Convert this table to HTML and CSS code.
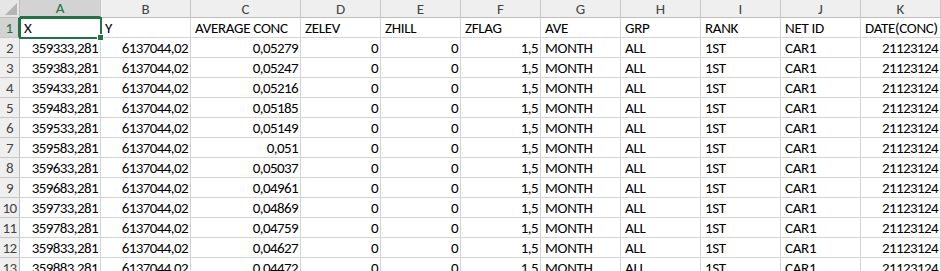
FILE: index.html
```html
<!DOCTYPE html>
<html>
<head>
<meta charset="utf-8">
<link rel="stylesheet" href="styles.css">
</head>
<body>
<div class="sheet" id="sheet">
  <div class="corner"><span class="tri"></span></div>
  <div class="ch sel">A</div><div class="ch">B</div><div class="ch">C</div><div class="ch">D</div><div class="ch">E</div><div class="ch">F</div><div class="ch">G</div><div class="ch">H</div><div class="ch">I</div><div class="ch">J</div><div class="ch">K</div>

  <div class="rh sel">1</div>
  <div class="c active">X<span class="handle"></span></div><div class="c">Y</div><div class="c">AVERAGE CONC</div><div class="c">ZELEV</div><div class="c">ZHILL</div><div class="c">ZFLAG</div><div class="c">AVE</div><div class="c">GRP</div><div class="c">RANK</div><div class="c">NET ID</div><div class="c">DATE(CONC)</div>

  <div class="rh">2</div><div class="c n">359333,281</div><div class="c n">6137044,02</div><div class="c n">0,05279</div><div class="c n">0</div><div class="c n">0</div><div class="c n">1,5</div><div class="c">MONTH</div><div class="c">ALL</div><div class="c">1ST</div><div class="c">CAR1</div><div class="c n">21123124</div>
  <div class="rh">3</div><div class="c n">359383,281</div><div class="c n">6137044,02</div><div class="c n">0,05247</div><div class="c n">0</div><div class="c n">0</div><div class="c n">1,5</div><div class="c">MONTH</div><div class="c">ALL</div><div class="c">1ST</div><div class="c">CAR1</div><div class="c n">21123124</div>
  <div class="rh">4</div><div class="c n">359433,281</div><div class="c n">6137044,02</div><div class="c n">0,05216</div><div class="c n">0</div><div class="c n">0</div><div class="c n">1,5</div><div class="c">MONTH</div><div class="c">ALL</div><div class="c">1ST</div><div class="c">CAR1</div><div class="c n">21123124</div>
  <div class="rh">5</div><div class="c n">359483,281</div><div class="c n">6137044,02</div><div class="c n">0,05185</div><div class="c n">0</div><div class="c n">0</div><div class="c n">1,5</div><div class="c">MONTH</div><div class="c">ALL</div><div class="c">1ST</div><div class="c">CAR1</div><div class="c n">21123124</div>
  <div class="rh">6</div><div class="c n">359533,281</div><div class="c n">6137044,02</div><div class="c n">0,05149</div><div class="c n">0</div><div class="c n">0</div><div class="c n">1,5</div><div class="c">MONTH</div><div class="c">ALL</div><div class="c">1ST</div><div class="c">CAR1</div><div class="c n">21123124</div>
  <div class="rh">7</div><div class="c n">359583,281</div><div class="c n">6137044,02</div><div class="c n">0,051</div><div class="c n">0</div><div class="c n">0</div><div class="c n">1,5</div><div class="c">MONTH</div><div class="c">ALL</div><div class="c">1ST</div><div class="c">CAR1</div><div class="c n">21123124</div>
  <div class="rh">8</div><div class="c n">359633,281</div><div class="c n">6137044,02</div><div class="c n">0,05037</div><div class="c n">0</div><div class="c n">0</div><div class="c n">1,5</div><div class="c">MONTH</div><div class="c">ALL</div><div class="c">1ST</div><div class="c">CAR1</div><div class="c n">21123124</div>
  <div class="rh">9</div><div class="c n">359683,281</div><div class="c n">6137044,02</div><div class="c n">0,04961</div><div class="c n">0</div><div class="c n">0</div><div class="c n">1,5</div><div class="c">MONTH</div><div class="c">ALL</div><div class="c">1ST</div><div class="c">CAR1</div><div class="c n">21123124</div>
  <div class="rh">10</div><div class="c n">359733,281</div><div class="c n">6137044,02</div><div class="c n">0,04869</div><div class="c n">0</div><div class="c n">0</div><div class="c n">1,5</div><div class="c">MONTH</div><div class="c">ALL</div><div class="c">1ST</div><div class="c">CAR1</div><div class="c n">21123124</div>
  <div class="rh">11</div><div class="c n">359783,281</div><div class="c n">6137044,02</div><div class="c n">0,04759</div><div class="c n">0</div><div class="c n">0</div><div class="c n">1,5</div><div class="c">MONTH</div><div class="c">ALL</div><div class="c">1ST</div><div class="c">CAR1</div><div class="c n">21123124</div>
  <div class="rh">12</div><div class="c n">359833,281</div><div class="c n">6137044,02</div><div class="c n">0,04627</div><div class="c n">0</div><div class="c n">0</div><div class="c n">1,5</div><div class="c">MONTH</div><div class="c">ALL</div><div class="c">1ST</div><div class="c">CAR1</div><div class="c n">21123124</div>
  <div class="rh">13</div><div class="c n">359883,281</div><div class="c n">6137044,02</div><div class="c n">0,04472</div><div class="c n">0</div><div class="c n">0</div><div class="c n">1,5</div><div class="c">MONTH</div><div class="c">ALL</div><div class="c">1ST</div><div class="c">CAR1</div><div class="c n">21123124</div>
</div>
</body>
</html>
```
FILE: styles.css
```css
html, body {
  margin: 0;
  padding: 0;
  background: #ffffff;
  overflow: hidden;
}
.sheet {
  display: grid;
  grid-template-columns: 20px 81px 90px 110px 80px 80px 80px 80px 80px 80px 80px 80px;
  grid-template-rows: 18px repeat(13, 20px);
  width: 941px;
  font-family: Carlito, "Liberation Sans", Arial, sans-serif;
  font-size: 15px;
  color: #000;
}
.sheet > div {
  box-sizing: border-box;
  border-right: 1px solid #d4d4d4;
  border-bottom: 1px solid #d4d4d4;
  white-space: nowrap;
  overflow: visible;
}
.corner {
  background: #e6e6e6;
  border-right: 1px solid #bdbdbd !important;
  border-bottom: 1px solid #bdbdbd !important;
  position: relative;
}
.tri {
  position: absolute;
  right: 2px;
  bottom: 2px;
  width: 0;
  height: 0;
  border-left: 12px solid transparent;
  border-bottom: 12px solid #b4b4b4;
}
.ch {
  background: #efefef;
  color: #444;
  border-right: 1px solid #c6c6c6 !important;
  border-bottom: 1px solid #bdbdbd !important;
  display: flex;
  align-items: center;
  justify-content: center;
}
.ch.sel {
  background: #d3d3d3;
  color: #217346;
  border-bottom: 2px solid #217346 !important;
}
.rh {
  background: #efefef;
  color: #444;
  border-right: 1px solid #bdbdbd !important;
  border-bottom: 1px solid #c6c6c6 !important;
  display: flex;
  align-items: flex-end;
  justify-content: center;
  letter-spacing: -0.5px;
}
.rh.sel {
  background: #d3d3d3;
  color: #217346;
  border-right: 2px solid #217346 !important;
}
.c {
  display: flex;
  align-items: flex-end;
  padding: 0 2px 0 4px;
  position: relative;
  letter-spacing: -0.3px;
}
.c.n {
  justify-content: flex-end;
  padding: 0 2px 0 2px;
  letter-spacing: -0.6px;
}
.c.active {
  outline: 2px solid #217346;
  outline-offset: -1px;
  z-index: 2;
}
.handle {
  position: absolute;
  right: -4px;
  bottom: -4px;
  width: 5px;
  height: 5px;
  background: #217346;
  border: 1px solid #fff;
}
```
